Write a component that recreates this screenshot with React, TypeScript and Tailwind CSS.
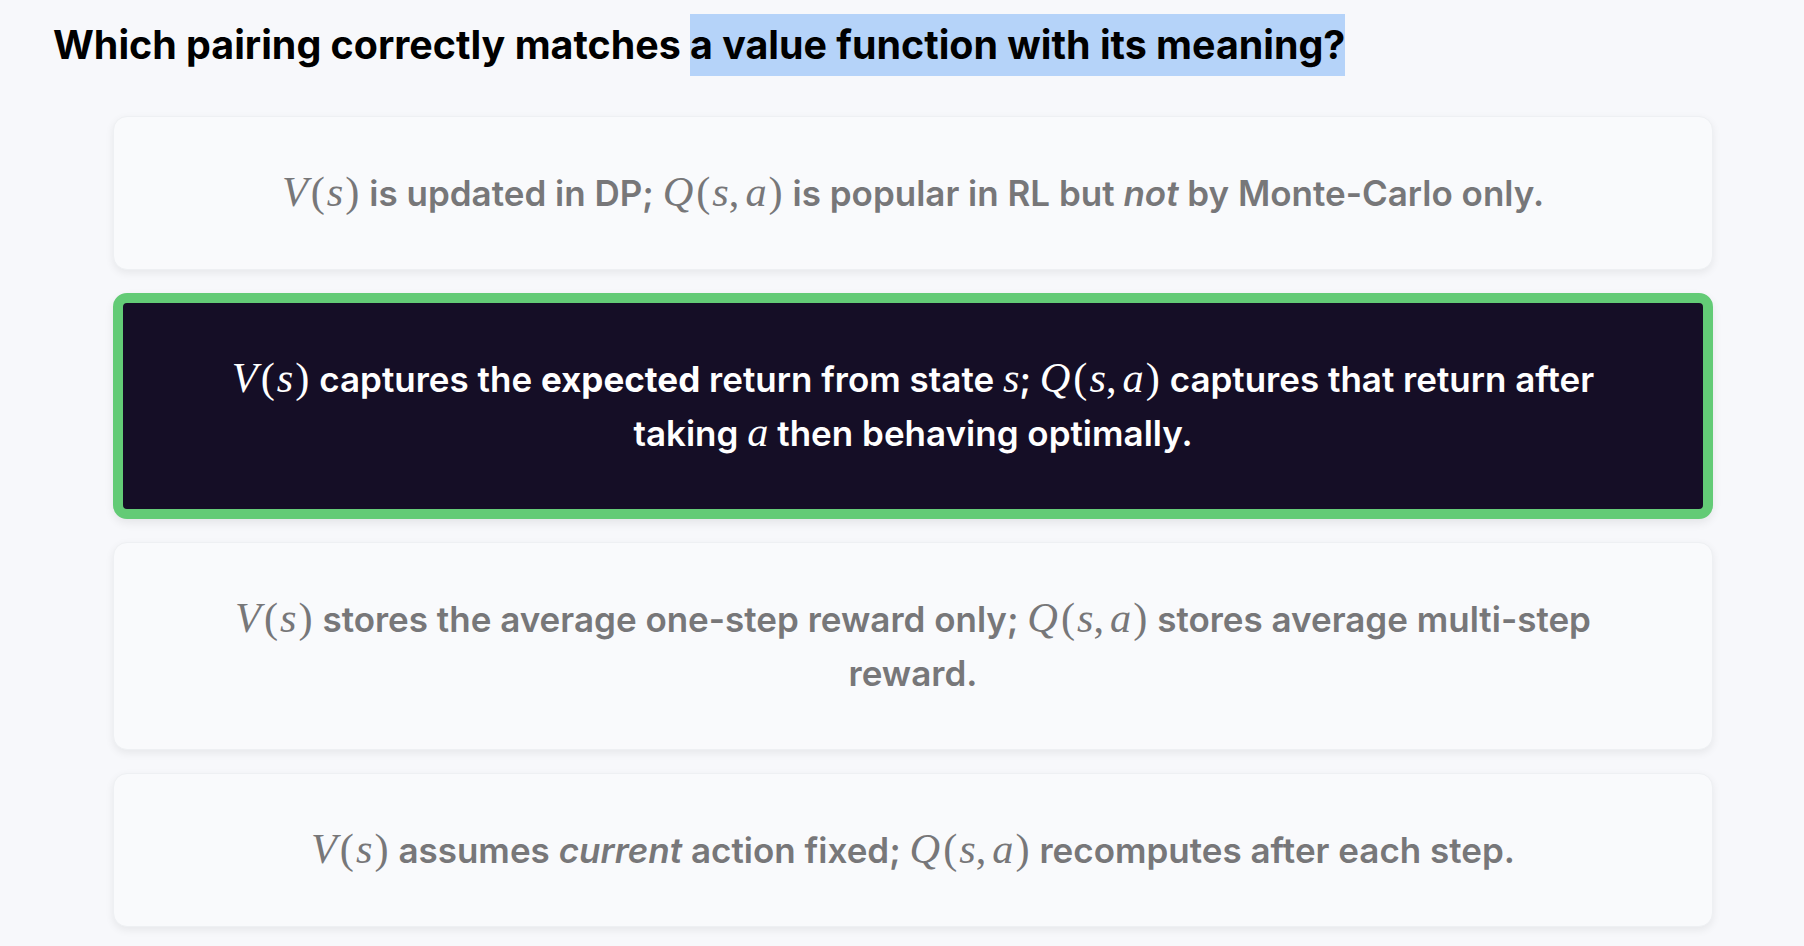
import React from "react";

// KaTeX-like inline math: italic serif letters, upright parens
function M({ children }: { children: React.ReactNode }) {
  return (
    <span className="font-['Liberation_Serif',serif] text-[1.21em] font-normal leading-[1]">
      {children}
    </span>
  );
}

function I({ children }: { children: React.ReactNode }) {
  return <i className="italic">{children}</i>;
}

const L = () => <span className="ml-[3px] mr-[2px]">(</span>;
const R = () => <span className="ml-[2px] mr-[1px]">)</span>;

const Vs = () => (
  <M>
    <I>V</I>
    <L />
    <I>s</I>
    <R />
  </M>
);

const Qsa = () => (
  <M>
    <I>Q</I>
    <L />
    <I>s</I>,<span className="ml-[6px]" />
    <I>a</I>
    <R />
  </M>
);

function Option({
  selected,
  children,
}: {
  selected?: boolean;
  children: React.ReactNode;
}) {
  return (
    <div
      className={
        selected
          ? "rounded-[14px] border-[10px] border-[#63cb76] bg-[#150e26] px-[72px] py-[49px] text-center text-white shadow-[0_4px_10px_rgba(0,0,0,0.08)]"
          : "rounded-[14px] border border-[#eef0f3] bg-[#f9fafc] px-[81px] py-[49px] text-center text-[#777779] shadow-[0_3px_8px_rgba(0,0,0,0.07)]"
      }
    >
      <p className="text-[35px] font-semibold leading-[54px]">{children}</p>
    </div>
  );
}

export default function App() {
  return (
    <div className="min-h-screen bg-[#f7f8fb] pl-[53px] pr-[91px] font-['Inter',sans-serif]">
      <h1 className="pt-[15px] text-[39.4px] font-bold leading-[60px] text-black">
        Which pairing correctly matches{" "}
        <span className="bg-[#b5d3f9] py-[7px]">a value function with its meaning?</span>
      </h1>

      <div className="ml-[60px] mt-[41px] flex flex-col gap-[23px]">
        <Option>
          <Vs /> is updated in DP; <Qsa /> is popular in RL but <em>not</em> by
          Monte-Carlo only.
        </Option>
        <Option selected>
          <Vs /> captures the <strong className="font-bold">expected</strong>{" "}
          return from state{" "}
          <M>
            <I>s</I>
          </M>
          ; <Qsa /> captures that return after taking{" "}
          <M>
            <I>a</I>
          </M>{" "}
          then behaving optimally.
        </Option>
        <Option>
          <Vs /> stores the average one-step reward only; <Qsa /> stores
          average multi-step reward.
        </Option>
        <Option>
          <Vs /> assumes <em>current</em> action fixed; <Qsa /> recomputes
          after each step.
        </Option>
      </div>
    </div>
  );
}
